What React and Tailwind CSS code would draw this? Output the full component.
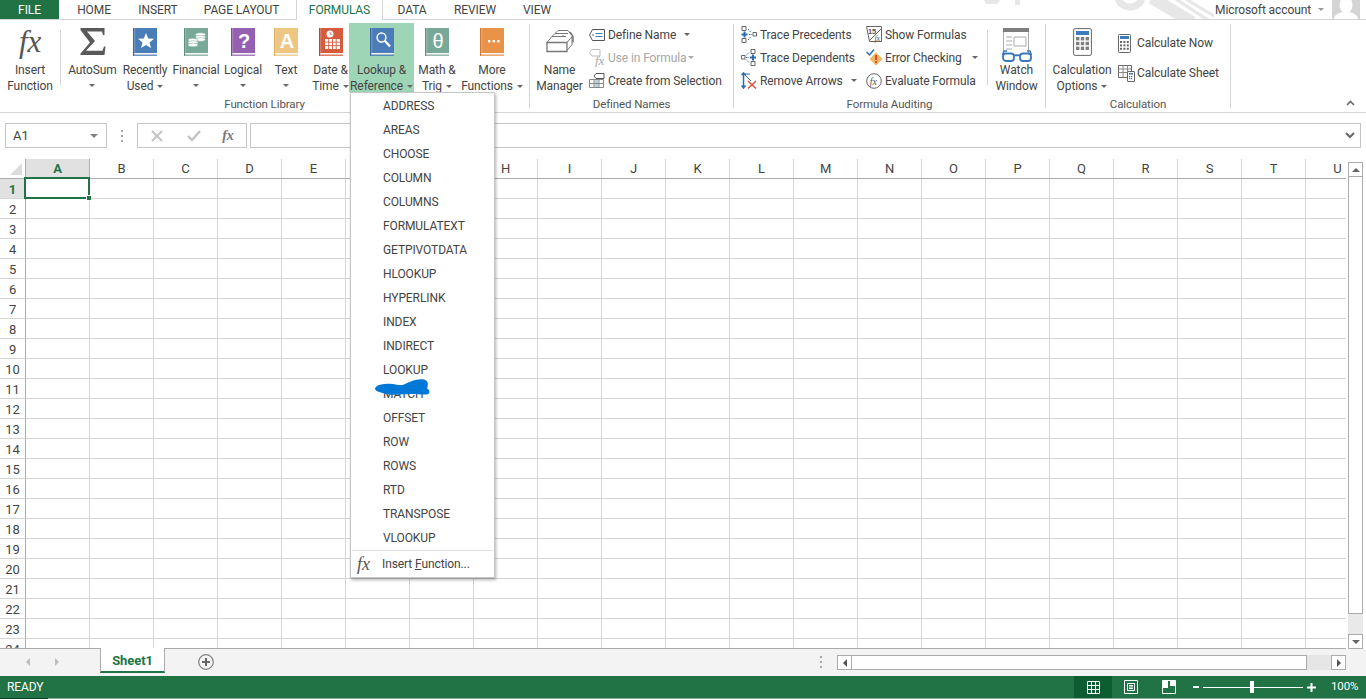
import React from 'react';

const tabs = [
  ['HOME', 'w-[70px]'],
  ['INSERT', 'w-[58px]'],
  ['PAGE LAYOUT', 'w-[109px]'],
  ['FORMULAS', 'w-[87px]'],
  ['DATA', 'w-[58px]'],
  ['REVIEW', 'w-[68px]'],
  ['VIEW', 'w-[56px]'],
];

const lookupItems = ['ADDRESS', 'AREAS', 'CHOOSE', 'COLUMN', 'COLUMNS', 'FORMULATEXT', 'GETPIVOTDATA', 'HLOOKUP', 'HYPERLINK', 'INDEX', 'INDIRECT', 'LOOKUP', 'MATCH', 'OFFSET', 'ROW', 'ROWS', 'RTD', 'TRANSPOSE', 'VLOOKUP'];
const columns = 'ABCDEFGHIJKLMNOPQRSTU'.split('');
const rows = Array.from({ length: 24 }, (_, i) => i + 1);

const Caret = ({ className = '' }) => (
  <span className={`inline-block h-0 w-0 border-x-[3px] border-t-[3px] border-x-transparent border-t-[#666] ${className}`} />
);

const Book = ({ color, dark, children }) => (
  <svg width="24" height="28" viewBox="0 0 24 28">
    <rect x="0" y="0" width="24" height="25" fill={color} />
    <rect x="0" y="0" width="1.5" height="28" fill={dark} />
    <rect x="1.5" y="0" width="0.6" height="25" fill="#ffffff" opacity="0.5" />
    <rect x="1.5" y="25" width="22.5" height="1.6" fill="#f4f4f4" />
    <rect x="1.5" y="26.6" width="22.5" height="1.2" fill={color} />
    {children}
  </svg>
);

const Star = () => <polygon fill="#fff" points="13,5 15.2,10.4 21,10.8 16.5,14.5 18,20 13,17 8,20 9.5,14.5 5,10.8 10.8,10.4" />;
const Coins = () => (
  <g fill="#fff" stroke="#78a998" strokeWidth="0.5">
    <ellipse cx="16.5" cy="6.5" rx="5" ry="1.8" />
    <ellipse cx="16.5" cy="9" rx="5" ry="1.8" />
    <ellipse cx="16.5" cy="11.5" rx="5" ry="1.8" />
    <ellipse cx="9" cy="12" rx="5" ry="1.8" />
    <ellipse cx="9" cy="14.5" rx="5" ry="1.8" />
    <ellipse cx="9" cy="17" rx="5" ry="1.8" />
  </g>
);
const Calendar = () => (
  <g>
    <circle cx="11" cy="6" r="3.5" fill="#fff" />
    <path d="M11 4v2.2h2" stroke="#d65b3d" strokeWidth="0.8" fill="none" />
    <path d="M6 11h15v10H6z" fill="#fff" />
    <path d="M6 14.2h15M6 17.6h15M9.7 11v10M13.5 11v10M17.2 11v10" stroke="#d65b3d" strokeWidth="0.9" />
  </g>
);
const Magnifier = () => (
  <g fill="none" stroke="#fff">
    <circle cx="11.5" cy="9.5" r="4.4" strokeWidth="1.5" />
    <path d="M15 13l5 5.5" strokeWidth="2.2" />
  </g>
);
const Dots = () => (
  <g fill="#fff">
    <rect x="8" y="12" width="2.4" height="2.4" />
    <rect x="12.6" y="12" width="2.4" height="2.4" />
    <rect x="17.2" y="12" width="2.4" height="2.4" />
  </g>
);
const BookText = ({ children, size, weight = 700 }) => (
  <text x="13" y="19.5" fontSize={size} textAnchor="middle" fill="#fff" fontWeight={weight} fontFamily="'Liberation Sans', sans-serif">{children}</text>
);

const Sigma = () => (
  <svg width="26" height="27" viewBox="0 0 26 27">
    <path d="M0.5 0H24.5V7H23L22 3.4H7L15 13 6 22.8H22.5L24 18.5H25.5L24.5 27H0.5V25.5L10 14.5 0.5 2z" fill="#595959" />
  </svg>
);

const NameManagerIcon = () => (
  <svg width="28" height="25" viewBox="0 0 28 25" fill="none" stroke="#777">
    <path d="M1 14.500h20v9H1z" strokeWidth="1.300" />
    <path d="M1 14.500l5-6h14M21 14.500l5-6v8l-5 6" />
    <path d="M6 8.500l3-3h13M9 5.500l3-3h10l3 4" />
    <circle cx="17" cy="8" r="0.8" fill="#777" stroke="none" />
    <path d="M24 4l3 4.500v6" strokeWidth="1.500" />
  </svg>
);
const DefineNameIcon = () => (
  <svg width="16" height="12" viewBox="0 0 16 12" fill="none" stroke="#555">
    <path d="M3.5 0.5H15.5V11.5H3.5L0.5 6z" />
    <circle cx="4" cy="6" r="0.8" fill="#555" stroke="none" />
    <path d="M6.5 4.5h7M6.5 7.5h7" stroke="#4a7db7" />
  </svg>
);
const UseFormulaIcon = () => (
  <svg width="17" height="18" viewBox="0 0 17 18" fill="none">
    <path d="M3 0.5H11V7H3L0.5 3.7z" stroke="#bbb" />
    <text x="6" y="16" fontSize="13" fontStyle="italic" fill="#aaa" fontFamily="'Liberation Serif', serif">fx</text>
  </svg>
);
const CreateSelectionIcon = () => (
  <svg width="16" height="15" viewBox="0 0 16 15" fill="none">
    <path d="M0.5 6.5h14v8h-14z" stroke="#888" />
    <path d="M5.5 7h4v7h-4z" fill="#b9cfe6" />
    <path d="M0.5 10.5h14M5 6.5v8M10 6.5v8" stroke="#888" />
    <path d="M7 0.5h8v5H7L5 3z" fill="#fff" stroke="#555" />
  </svg>
);
const TracePrecedentsIcon = () => (
  <svg width="16" height="17" viewBox="0 0 16 17" fill="none">
    <path d="M1 .5h4v4H1zM1 12.500h4v4H1zM12 6.500h3.500V10H12z" stroke="#666" />
    <path d="M3.500 5.500v6M.5 8.500h6" stroke="#2b6cb0" strokeWidth="2" />
    <path d="M7 3l3 3.500M7 14l3-3.500M8 8.500h3" stroke="#2b6cb0" strokeDasharray="1.500 1" />
  </svg>
);
const TraceDependentsIcon = () => (
  <svg width="16" height="17" viewBox="0 0 16 17" fill="none">
    <path d="M10 .5h4v4h-4zM10 12.500h4v4h-4zM.5 6.500h3.500V10H.5z" stroke="#666" />
    <path d="M12 5.500v6M9 8.500h6" stroke="#2b6cb0" strokeWidth="2" />
    <path d="M5 6.500l3-3M5 10.500l3 3M5 8.500h3" stroke="#2b6cb0" strokeDasharray="1.500 1" />
  </svg>
);
const RemoveArrowsIcon = () => (
  <svg width="17" height="17" viewBox="0 0 17 17" fill="none">
    <path d="M2.500 1v15M.5 13.500l2 2.500 2-2.500M.5 3l2-2 2 2" stroke="#2b6cb0" strokeWidth="1.500" />
    <path d="M3 2h6M3 2l7 7" stroke="#2b6cb0" />
    <path d="M7 9l8 7.500M15 9l-8 7.500" stroke="#d9573a" strokeWidth="1.500" />
  </svg>
);
const ShowFormulasIcon = () => (
  <svg width="17" height="17" viewBox="0 0 17 17" fill="none">
    <path d="M.5.5h15v15h-12z" stroke="#666" />
    <text x="2" y="8" fontSize="7.500" fontWeight="700" fill="#555" fontFamily="'Liberation Sans', sans-serif">15</text>
    <path d="M3 15L15 3" stroke="#666" />
    <text x="8.500" y="15" fontSize="8" fontStyle="italic" fill="#555" fontFamily="'Liberation Serif', serif">fx</text>
  </svg>
);
const ErrorCheckingIcon = () => (
  <svg width="17" height="17" viewBox="0 0 17 17" fill="none">
    <path d="M.5 3l3 3 4.500-5.500" stroke="#2b6cb0" strokeWidth="1.500" />
    <path d="M10 3.500l6.500 6.500-6.500 6.500L3.500 10z" fill="#f2b661" />
    <path d="M10 6v5M10 12.300v1.800" stroke="#d13b2b" strokeWidth="1.700" />
  </svg>
);
const EvaluateIcon = () => (
  <svg width="16" height="16" viewBox="0 0 16 16" fill="none">
    <circle cx="8" cy="8" r="7.300" stroke="#666" />
    <text x="3.800" y="11.500" fontSize="10" fontStyle="italic" fill="#555" fontFamily="'Liberation Serif', serif">fx</text>
  </svg>
);
const WatchIcon = () => (
  <svg width="30" height="35" viewBox="0 0 30 35" fill="none">
    <path d="M1.500.5h25v26h-25z" stroke="#aaa" fill="#fff" />
    <rect x="1" y="0" width="26" height="4" fill="#7f7f7f" />
    <path d="M4 9h6M4 13h6M4 17h6M4 21h6" stroke="#aaa" />
    <path d="M12 9h12v9H12z" stroke="#aaa" />
    <path d="M0.500 27l1.500-4h3M29.500 27l-1.500-4h-3" stroke="#3a78bd" strokeWidth="1.500" />
    <rect x="1" y="25.500" width="11" height="7.500" rx="3" stroke="#3a78bd" strokeWidth="1.800" fill="#fff" />
    <rect x="18" y="25.500" width="11" height="7.500" rx="3" stroke="#3a78bd" strokeWidth="1.800" fill="#fff" />
    <path d="M12 27.500h6" stroke="#3a78bd" strokeWidth="1.500" />
  </svg>
);
const CalcKeys = ({ x, y, size, gap, n, m, color }) => (
  <g fill={color}>
    {Array.from({ length: n * m }, (_, i) => (
      <rect key={i} x={x + (i % m) * (size + gap)} y={y + Math.floor(i / m) * (size + gap)} width={size} height={size} />
    ))}
  </g>
);
const CalcOptionsIcon = () => (
  <svg width="19" height="28" viewBox="0 0 19 28" fill="none">
    <rect x=".6" y=".6" width="17.800" height="26.800" rx="1.500" stroke="#666" />
    <rect x="3" y="3" width="13" height="4" fill="#3f7bbf" />
    <CalcKeys x={3} y={9} size={3.400} gap={1.400} n={3} m={3} color="#7f7f7f" />
  </svg>
);
const CalcNowIcon = () => (
  <svg width="13" height="19" viewBox="0 0 13 19" fill="none">
    <rect x=".5" y=".5" width="12" height="18" rx="1" stroke="#666" />
    <rect x="2" y="2" width="9" height="3" fill="#3f7bbf" />
    <CalcKeys x={2} y={7} size={2} gap={1.400} n={3} m={3} color="#666" />
  </svg>
);
const CalcSheetIcon = () => (
  <svg width="17" height="17" viewBox="0 0 17 17" fill="none">
    <path d="M.5.5h13v12H.5z" stroke="#666" />
    <path d="M.5 4h13M.5 7.500h13M5 .5v12M9.500 .5v12" stroke="#888" />
    <rect x="9.500" y="6.500" width="7" height="10" rx=".5" fill="#fff" stroke="#666" />
    <rect x="11" y="8" width="4" height="1.500" fill="#3f7bbf" />
    <CalcKeys x={11} y={11} size={1.200} gap={.8} n={2} m={2} color="#666" />
  </svg>
);

const BigButton = ({ icon, label, second, width, active }) => (
  <div className={`flex h-[69px] shrink-0 flex-col items-center ${width} ${active ? 'bg-[#9fd5b7]' : ''}`}>
    <div className="flex h-[38px] shrink-0 items-start pt-[5px]">{icon}</div>
    <div className="flex flex-col items-center whitespace-nowrap pt-px leading-4">
      <span>{label}</span>
      <span className="flex items-center gap-1">{second}</span>
    </div>
  </div>
);

const SmallRow = ({ icon, children, disabled, className = 'h-[23px]' }) => (
  <div className={`flex items-center whitespace-nowrap ${className} ${disabled ? 'text-[#a6a6a6]' : ''}`}>
    <span className="flex w-[19px] shrink-0 items-center">{icon}</span>
    {children}
  </div>
);

const Group = ({ width, label, children }) => (
  <div className={`flex shrink-0 flex-col ${width}`}>
    <div className="flex h-[69px]">{children}</div>
    <div className="mt-[5px] h-[14px] text-center text-[11.5px] leading-[14px] text-[#555]">{label}</div>
  </div>
);

const GroupLine = () => <div className="mt-px h-[84px] w-px shrink-0 bg-[#d4d4d4]" />;
const InnerLine = () => <div className="mt-[7px] h-[55px] w-px shrink-0 bg-[#d4d4d4]" />;

const Ribbon = () => (
  <div className="flex h-[93px] border-b border-[#d4d4d4] pt-[3px]">
    <Group width="w-[529px]" label="Function Library">
      <BigButton width="w-[60px]" icon={<span className="-mt-[5px] font-['Liberation_Serif',serif] text-[31px] leading-[38px] italic text-[#555]">fx</span>} label="Insert" second="Function" />
      <InnerLine />
      <BigButton width="w-[63px]" icon={<Sigma />} label="AutoSum" second={<Caret className="mt-[6px]" />} />
      <BigButton width="w-[42px]" icon={<Book color="#4a7db7" dark="#39689f"><Star /></Book>} label="Recently" second={<>Used <Caret /></>} />
      <BigButton width="w-[60px]" icon={<Book color="#78a998" dark="#5f9180"><Coins /></Book>} label="Financial" second={<Caret className="mt-[6px]" />} />
      <BigButton width="w-[34px]" icon={<Book color="#9560b1" dark="#7d4c98"><BookText size={20}>?</BookText></Book>} label="Logical" second={<Caret className="mt-[6px]" />} />
      <BigButton width="w-[52px]" icon={<Book color="#efc681" dark="#dcae62"><BookText size={20}>A</BookText></Book>} label="Text" second={<Caret className="mt-[6px]" />} />
      <BigButton width="w-[37px]" icon={<Book color="#d65b3d" dark="#b9472c"><Calendar /></Book>} label="Date &" second={<>Time <Caret /></>} />
      <BigButton width="w-[65px]" active icon={<Book color="#4a7db7" dark="#39689f"><Magnifier /></Book>} label="Lookup &" second={<>Reference <Caret /></>} />
      <BigButton width="w-[46px]" icon={<Book color="#78a998" dark="#5f9180"><BookText size={20} weight={400}>θ</BookText></Book>} label="Math &" second={<>Trig <Caret /></>} />
      <BigButton width="w-[64px]" icon={<Book color="#e8924a" dark="#cf7a33"><Dots /></Book>} label="More" second={<>Functions <Caret /></>} />
    </Group>
    <GroupLine />
    <Group width="w-[203px]" label="Defined Names">
      <BigButton width="w-[59px]" icon={<NameManagerIcon />} label="Name" second="Manager" />
      <div className="flex flex-col">
        <SmallRow icon={<DefineNameIcon />}>Define Name<Caret className="ml-2" /></SmallRow>
        <SmallRow disabled icon={<UseFormulaIcon />}>Use in Formula<Caret className="ml-0.5 border-t-[#aaa]" /></SmallRow>
        <SmallRow icon={<CreateSelectionIcon />}>Create from Selection</SmallRow>
      </div>
    </Group>
    <GroupLine />
    <Group width="w-[311px]" label="Formula Auditing">
      <div className="flex w-[132px] shrink-0 flex-col pl-[7px]">
        <SmallRow icon={<TracePrecedentsIcon />}>Trace Precedents</SmallRow>
        <SmallRow icon={<TraceDependentsIcon />}>Trace Dependents</SmallRow>
        <SmallRow icon={<RemoveArrowsIcon />}>Remove Arrows<Caret className="ml-2" /></SmallRow>
      </div>
      <div className="flex w-[121px] shrink-0 flex-col">
        <SmallRow icon={<ShowFormulasIcon />}>Show Formulas</SmallRow>
        <SmallRow icon={<ErrorCheckingIcon />}>Error Checking<Caret className="ml-2.5" /></SmallRow>
        <SmallRow icon={<EvaluateIcon />}>Evaluate Formula</SmallRow>
      </div>
      <InnerLine />
      <BigButton width="w-[57px]" icon={<WatchIcon />} label="Watch" second="Window" />
    </Group>
    <GroupLine />
    <Group width="w-[184px]" label="Calculation">
      <BigButton width="w-[72px]" icon={<CalcOptionsIcon />} label="Calculation" second={<>Options <Caret /></>} />
      <div className="flex flex-col pt-[5px]">
        <SmallRow className="h-[30px]" icon={<CalcNowIcon />}>Calculate Now</SmallRow>
        <SmallRow className="h-[30px]" icon={<CalcSheetIcon />}>Calculate Sheet</SmallRow>
      </div>
    </Group>
    <GroupLine />
    <div className="ml-auto mr-[11px] mt-[77px]">
      <svg width="9" height="6" viewBox="0 0 9 6" fill="none"><path d="M1 5l3.500-3.500L8 5" stroke="#666" strokeWidth="1.600" /></svg>
    </div>
  </div>
);

const Watermark = () => (
  <svg className="absolute left-[960px] top-0" width="260" height="19" viewBox="0 0 260 19" fill="none" stroke="#e7e7e7">
    <path d="M24 0h16l-3 4H26zM55 0h5v5h-5z" fill="#e7e7e7" stroke="none" />
    <circle cx="170" cy="-6" r="13" strokeWidth="7" />
    <path d="M192 -2L232 22" strokeWidth="12" />
    <path d="M214 -2L248 20M224 -2L254 16" strokeWidth="3" />
  </svg>
);

const TopTabs = () => (
  <div className="relative flex h-5 items-stretch border-b border-[#d4d4d4]">
    <Watermark />
    <div className="flex w-[59px] items-center justify-center bg-[#217346] text-white">FILE</div>
    {tabs.map(([name, width]) => (
      <div
        key={name}
        className={`relative flex items-center justify-center ${width} ${name === 'FORMULAS' ? 'h-5 border-x border-[#d4d4d4] bg-white text-[#217346]' : ''}`}
      >
        {name}
      </div>
    ))}
    <div className="relative ml-auto flex items-center pr-[6px]">
      <span>Microsoft account</span>
      <Caret className="ml-[7px] mr-[8px] border-t-[#999]" />
      <svg width="28" height="19" viewBox="0 0 28 19">
        <rect width="28" height="19" fill="#d4d4d4" />
        <ellipse cx="14" cy="5" rx="6.500" ry="8.500" fill="#fff" />
        <path d="M2 19c0-4 5-6 8-7 2.500 1.500 5.500 1.500 8 0 3 1 8 3 8 7z" fill="#fff" />
      </svg>
    </div>
  </div>
);

const FormulaBar = () => (
  <div className="flex h-[46px] shrink-0 items-start pl-[5px] pr-[5px] pt-[10px]">
    <div className="flex h-[25px] w-[102px] items-center justify-between border border-[#c6c6c6] pl-[7px] pr-[8px] text-[13px]">
      A1
      <Caret className="border-x-[4px] border-t-[4px] border-t-[#808080]" />
    </div>
    <div className="flex h-[25px] w-[30px] items-center justify-center">
      <span className="flex flex-col gap-[3px]">
        <i className="block h-0.5 w-0.5 bg-[#a6a6a6]" />
        <i className="block h-0.5 w-0.5 bg-[#a6a6a6]" />
        <i className="block h-0.5 w-0.5 bg-[#a6a6a6]" />
      </span>
    </div>
    <div className="flex h-[25px] w-[110px] items-center border border-[#c6c6c6]">
      <span className="flex w-[37px] justify-center">
        <svg width="12" height="12" viewBox="0 0 12 12" fill="none"><path d="M1 1l10 10M11 1L1 11" stroke="#c4c4c4" strokeWidth="2" /></svg>
      </span>
      <span className="flex w-[37px] justify-center">
        <svg width="14" height="12" viewBox="0 0 14 12" fill="none"><path d="M1 6l4 4 8-9" stroke="#c4c4c4" strokeWidth="2.400" /></svg>
      </span>
      <span className="w-[32px] text-center font-['Liberation_Serif',serif] text-[14px] font-bold italic text-[#777]">fx</span>
    </div>
    <div className="ml-[3px] flex h-[25px] flex-1 items-center justify-end border border-[#c6c6c6] pr-[5px]">
      <svg width="10" height="7" viewBox="0 0 10 7" fill="none"><path d="M1 1l4 4 4-4" stroke="#666" strokeWidth="2" /></svg>
    </div>
  </div>
);

const Sheet = () => (
  <div className="relative w-[1346px] shrink-0 overflow-hidden border-b border-[#ababab]">
    <div className="grid grid-cols-[26px_repeat(21,64px)] grid-rows-[20px_repeat(24,20px)]">
      <div className="flex items-end justify-end border-r border-b border-[#ababab] pb-[3px] pr-[3px]">
        <span className="h-0 w-0 border-b-[12px] border-l-[12px] border-b-[#dcdcdc] border-l-transparent" />
      </div>
      {columns.map((col) => (
        <div
          key={col}
          className={`flex items-center justify-center border-b border-[#ababab] text-[13px] ${col === 'A' ? 'border-r border-r-[#ababab] bg-[#e1e1e1] font-bold text-[#217346]' : 'border-r border-r-[#d4d4d4]'}`}
        >
          {col}
        </div>
      ))}
      {rows.map((row) => (
        <React.Fragment key={row}>
          <div className={`flex items-center justify-center border-r border-b pt-[2px] text-[13px] ${row === 1 ? 'border-r-[#ababab] border-b-[#d4d4d4] bg-[#e1e1e1] font-bold text-[#217346]' : 'border-r-[#ababab] border-b-[#d4d4d4]'}`}>
            {row}
          </div>
          {columns.map((col) => (
            <div key={col} className="relative border-r border-b border-[#d4d4d4]">
              {row === 1 && col === 'A' && (
                <div className="absolute -left-[2px] -top-[2px] z-10 h-[22px] w-[66px] border-2 border-[#217346]">
                  <span className="absolute -bottom-[4px] -right-[4px] h-[6px] w-[6px] border border-white bg-[#217346]" />
                </div>
              )}
            </div>
          ))}
        </React.Fragment>
      ))}
    </div>
  </div>
);

const VerticalScroll = () => (
  <div className="ml-[2px] flex w-[15px] shrink-0 flex-col pt-[3px]">
    <div className="flex h-[15px] shrink-0 items-center justify-center border border-[#ababab]">
      <span className="h-0 w-0 border-x-[4px] border-b-[4px] border-x-transparent border-b-[#666]" />
    </div>
    <div className="h-[437px] shrink-0 border-x border-b border-[#ababab] bg-white" />
    <div className="flex-1 bg-[#e9e9e9]" />
    <div className="flex h-[15px] shrink-0 items-center justify-center border border-[#ababab]">
      <Caret className="border-x-[4px] border-t-[4px]" />
    </div>
  </div>
);

const SheetBar = () => (
  <div className="flex h-[27px] shrink-0 bg-[#f3f3f3]">
    <div className="flex w-[100px] items-center pb-px pl-[26px]">
      <span className="h-0 w-0 border-y-[4px] border-r-[4px] border-y-transparent border-r-[#bdbdbd]" />
      <span className="ml-[25px] h-0 w-0 border-y-[4px] border-l-[4px] border-y-transparent border-l-[#bdbdbd]" />
    </div>
    <div className="relative -mt-px flex h-[25px] w-[65px] items-center justify-center border-x border-b-2 border-x-[#ababab] border-b-[#217346] bg-white pt-[2px] text-[13px] font-bold text-[#217346]">
      Sheet1
    </div>
    <div className="ml-[33px] flex items-center pb-px">
      <svg width="16" height="16" viewBox="0 0 16 16" fill="none">
        <circle cx="8" cy="8" r="7.300" stroke="#808080" strokeWidth="1.200" />
        <path d="M8 4v8M4 8h8" stroke="#666" strokeWidth="2" />
      </svg>
    </div>
    <div className="ml-[604px] flex w-[6px] flex-col items-center justify-center gap-[3px] pb-px">
      <i className="block h-0.5 w-0.5 bg-[#a6a6a6]" />
      <i className="block h-0.5 w-0.5 bg-[#a6a6a6]" />
      <i className="block h-0.5 w-0.5 bg-[#a6a6a6]" />
    </div>
    <div className="ml-[13px] mt-[6px] flex h-[15px] w-[509px]">
      <div className="flex w-[15px] items-center justify-center border border-[#ababab] bg-white">
        <span className="h-0 w-0 border-y-[4px] border-r-[4px] border-y-transparent border-r-[#555]" />
      </div>
      <div className="w-[455px] border-y border-r border-[#ababab] bg-white" />
      <div className="flex-1 bg-[#e6e6e6]" />
      <div className="flex w-[15px] items-center justify-center border border-[#ababab] bg-white">
        <span className="h-0 w-0 border-y-[4px] border-l-[4px] border-y-transparent border-l-[#555]" />
      </div>
    </div>
  </div>
);

const StatusBar = () => (
  <div className="flex h-[23px] shrink-0 flex-col">
    <div className="flex flex-1 items-center bg-[#217346] text-white">
      <span className="pl-[7px]">READY</span>
      <div className="ml-auto flex h-full items-center">
        <div className="flex h-full w-[38px] items-center justify-center bg-[#0e5c32]">
          <svg width="13" height="13" viewBox="0 0 13 13" fill="none" stroke="#fff"><path d="M.5.5h12v12H.5zM.5 4.500h12M.5 8.500h12M4.500 .5v12M8.500 .5v12" /></svg>
        </div>
        <div className="flex w-[38px] justify-center">
          <svg width="14" height="14" viewBox="0 0 14 14" fill="none" stroke="#fff"><path d="M.5.5h13v13H.5zM3.500 3.500h7v7h-7zM5 5.500h4M5 7h4M5 8.500h4" /></svg>
        </div>
        <div className="flex w-[38px] justify-center">
          <svg width="14" height="14" viewBox="0 0 14 14" fill="none"><path d="M.5.5h13v13H.5z" stroke="#fff" /><path d="M1 1h5v7H1zM8 1h5v5H8z" fill="#fff" /></svg>
        </div>
        <div className="ml-[5px] h-0.5 w-[6px] bg-white" />
        <div className="relative ml-1 flex h-[12px] w-[100px] items-center">
          <div className="h-px w-full bg-white" />
          <span className="absolute left-[47px] h-[12px] w-[4px] bg-white" />
        </div>
        <svg className="ml-1" width="9" height="9" viewBox="0 0 9 9"><path d="M3.500 0h2v3.500H9v2H5.500V9h-2V5.500H0v-2h3.500z" fill="#fff" /></svg>
        <span className="ml-[15px] w-[35px] text-[11.500px]">100%</span>
      </div>
    </div>
    <div className="flex h-px">
      <div className="w-[48px] bg-[#123f2b]" />
      <div className="flex-1 bg-[#8fa89b]" />
    </div>
  </div>
);

const LookupMenu = () => (
  <div className="absolute left-[350px] top-[92px] z-20 w-[145px] border border-[#c6c6c6] bg-white pt-px shadow-[1px_2px_3px_rgba(0,0,0,0.3)]">
    {lookupItems.map((item) => (
      <div key={item} className="flex h-6 items-center pl-[32px] text-[12px]">{item}</div>
    ))}
    <div className="mx-px h-px bg-[#e1e1e1]" />
    <div className="flex h-[26px] items-center">
      <span className="w-[31px] pl-[6px] font-['Liberation_Serif',serif] text-[18px] italic text-[#555]">fx</span>
      <span>Insert <u>F</u>unction...</span>
    </div>
  </div>
);

const Scribble = () => (
  <svg className="absolute left-[374px] top-[378px] z-30" width="57" height="17" viewBox="0 0 57 21" preserveAspectRatio="none">
    <path d="M1 13C2 8 9 7 16 7c6 0 9 3 14 1 5-3 14-8 20-6 5 1 4 8 3 11 3 2 3 6 1 7-7 1-12-1-20 0-8 0-18 2-24-1C4 17 1 16 1 13z" fill="#0078d7" />
  </svg>
);

export default function App() {
  return (
    <div className="relative flex h-[699px] w-[1366px] flex-col overflow-hidden bg-white font-['Roboto',sans-serif] text-[12px] tracking-[-0.1px] text-[#444]">
      <TopTabs />
      <Ribbon />
      <FormulaBar />
      <div className="flex min-h-0 flex-1">
        <Sheet />
        <VerticalScroll />
      </div>
      <SheetBar />
      <StatusBar />
      <LookupMenu />
      <Scribble />
    </div>
  );
}
